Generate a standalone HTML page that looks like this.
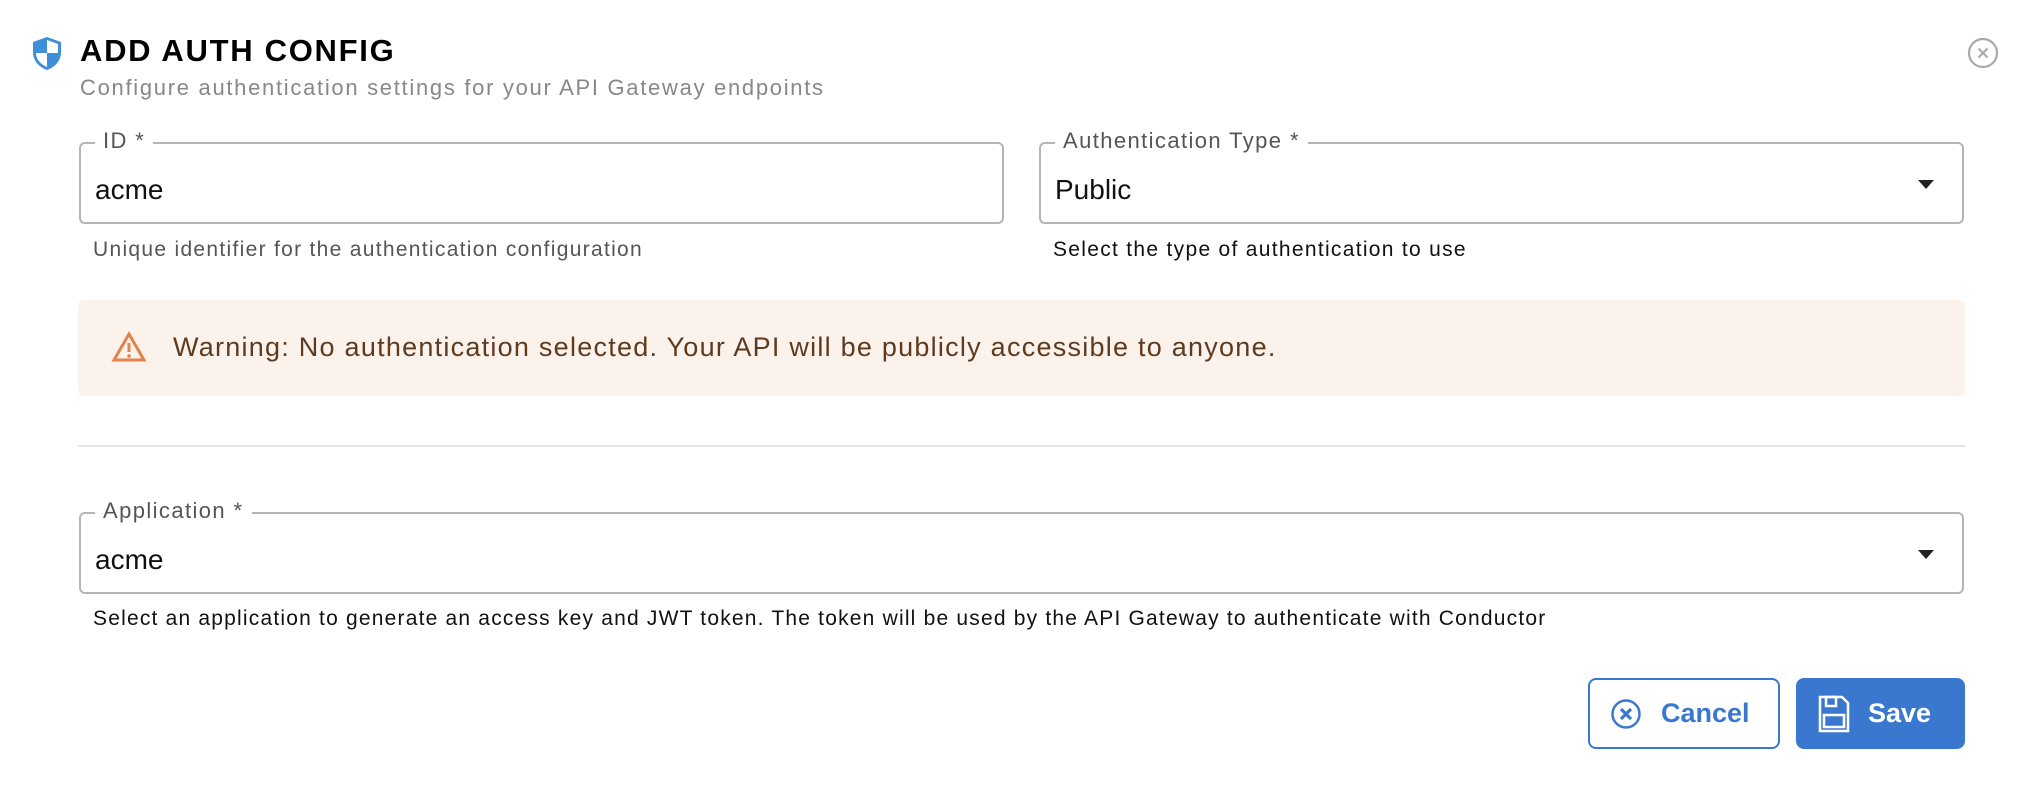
<!DOCTYPE html>
<html><head><meta charset="utf-8"><style>
*{box-sizing:border-box;margin:0;padding:0}
body{width:2028px;height:808px;background:#fff;font-family:"Liberation Sans",sans-serif;position:relative;overflow:hidden;color:#111}
.abs{position:absolute;white-space:nowrap}
.title{left:80px;top:33px;font-size:31px;font-weight:bold;color:#000;letter-spacing:1.7px}
.sub{left:80px;top:75px;font-size:22px;color:#888;letter-spacing:1.7px}
.box{position:absolute;border:2px solid #b5b5b5;border-radius:6px}
.lbl{position:absolute;top:-16px;left:14px;background:#fff;padding:0 8px;font-size:22px;color:#555;letter-spacing:1.4px;white-space:nowrap}
.val{position:absolute;left:14px;top:30px;font-size:28px;color:#111}
.help{font-size:21px;color:#333;letter-spacing:1.3px}
.arrow{position:absolute;right:28px;top:36px;width:0;height:0;border-left:8px solid transparent;border-right:8px solid transparent;border-top:9px solid #222}
.btn{position:absolute;top:678px;height:71px;border-radius:8px;font-size:27px;font-weight:bold;display:flex;align-items:center}
</style></head><body>
<svg class="abs" style="left:31px;top:36px" width="32" height="35" viewBox="0 0 32 35"><path d="M16 1 L30 6 V16 C30 25 24 31 16 34 C8 31 2 25 2 16 V6 Z" fill="#3e8ed8"/><path d="M16 4 V17 H27 C27 10 27 8 27 8 Z" fill="#fff"/><path d="M16 17 V31 C9 28 5 23 5 17 Z" fill="#fff"/></svg>
<div class="abs title">ADD AUTH CONFIG</div>
<div class="abs sub">Configure authentication settings for your API Gateway endpoints</div>
<svg class="abs" style="left:1967px;top:37px" width="32" height="32" viewBox="0 0 32 32"><circle cx="16" cy="16" r="14" fill="none" stroke="#aaa" stroke-width="2.2"/><path d="M11.5 11.5 L20.5 20.5 M20.5 11.5 L11.5 20.5" stroke="#aaa" stroke-width="2.2"/></svg>

<div class="box" style="left:79px;top:142px;width:925px;height:82px"><div class="lbl">ID *</div><div class="val">acme</div></div>
<div class="abs help" style="left:93px;top:238px;color:#555">Unique identifier for the authentication configuration</div>

<div class="box" style="left:1039px;top:142px;width:925px;height:82px"><div class="lbl">Authentication Type *</div><div class="val">Public</div><div class="arrow"></div></div>
<div class="abs help" style="left:1053px;top:238px;color:#111">Select the type of authentication to use</div>

<div class="abs" style="left:78px;top:300px;width:1887px;height:96px;background:#fbf2ec;border-radius:6px"></div>
<svg class="abs" style="left:111px;top:331px" width="36" height="32" viewBox="0 0 36 32"><path d="M18 3 L33 29 H3 Z" fill="none" stroke="#e2834c" stroke-width="3" stroke-linejoin="miter"/><path d="M18 12 V21" stroke="#e2834c" stroke-width="3"/><circle cx="18" cy="25" r="1.8" fill="#e2834c"/></svg>
<div class="abs" style="left:173px;top:332px;font-size:27px;color:#5e3a1f;letter-spacing:1.25px">Warning: No authentication selected. Your API will be publicly accessible to anyone.</div>

<div class="abs" style="left:78px;top:445px;width:1887px;height:2px;background:#e4e4e4"></div>

<div class="box" style="left:79px;top:512px;width:1885px;height:82px"><div class="lbl">Application *</div><div class="val">acme</div><div class="arrow"></div></div>
<div class="abs help" style="left:93px;top:607px;color:#111;letter-spacing:1.2px">Select an application to generate an access key and JWT token. The token will be used by the API Gateway to authenticate with Conductor</div>

<div class="btn" style="left:1588px;width:192px;border:2px solid #3a78d0;color:#3a78d0;background:#fff">
<svg style="margin-left:20px" width="32" height="32" viewBox="0 0 32 32"><circle cx="16" cy="16" r="13.5" fill="none" stroke="#3a78d0" stroke-width="2.5"/><path d="M11 11 L21 21 M21 11 L11 21" stroke="#3a78d0" stroke-width="3.2"/></svg>
<span style="margin-left:19px">Cancel</span></div>
<div class="btn" style="left:1796px;width:169px;background:#3a78d0;color:#fff">
<svg style="margin-left:22px" width="32" height="38" viewBox="0 0 32 38"><path d="M2 2 H24 L30 8 V36 H2 Z" fill="none" stroke="#fff" stroke-width="2.5"/><rect x="8" y="2" width="10" height="9" fill="none" stroke="#fff" stroke-width="2.5"/><rect x="6" y="20" width="20" height="12" fill="none" stroke="#fff" stroke-width="2.5"/></svg>
<span style="margin-left:18px">Save</span></div>
</body></html>
